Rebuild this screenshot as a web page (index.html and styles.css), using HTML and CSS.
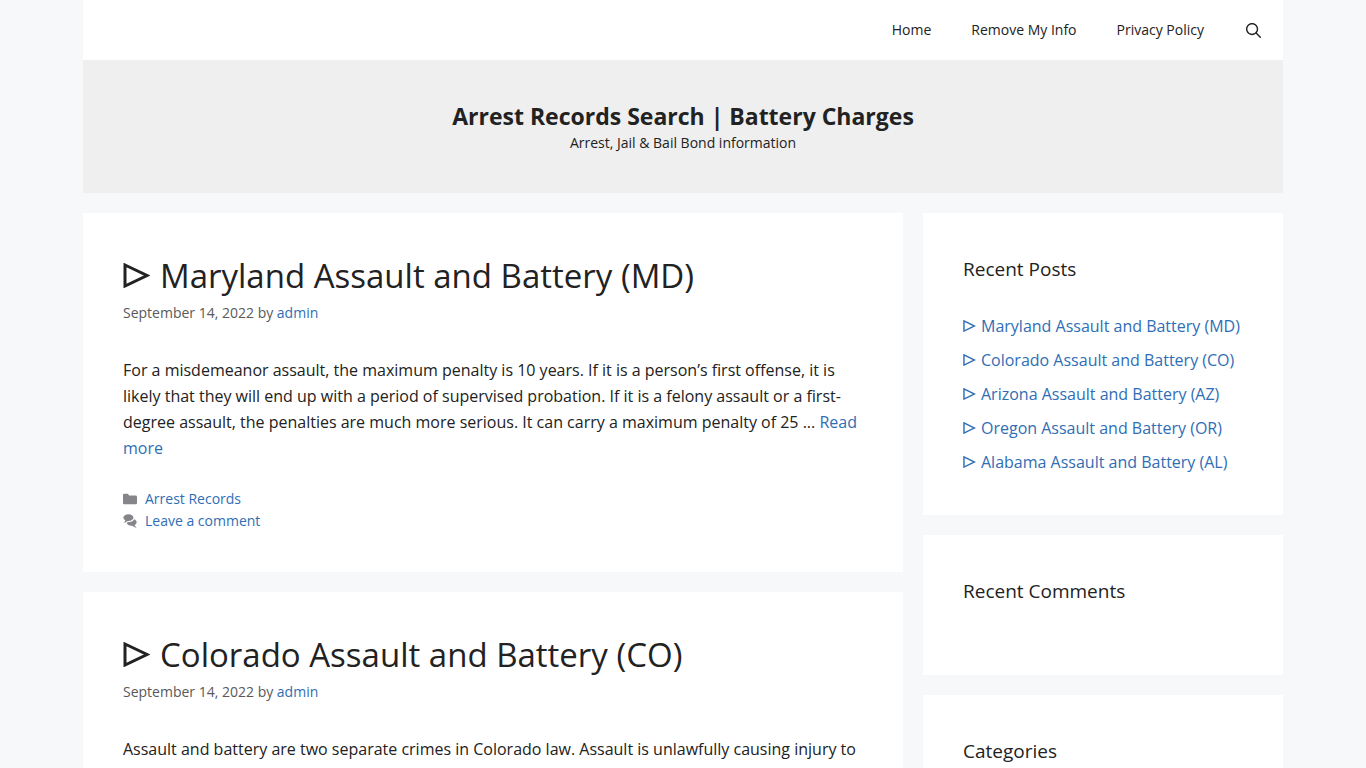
FILE: index.html
```html
<!DOCTYPE html>
<html lang="en">
<head>
<meta charset="utf-8">
<meta name="viewport" content="width=device-width, initial-scale=1">
<title>Arrest Records Search | Battery Charges</title>
<link rel="stylesheet" href="styles.css">
</head>
<body>
<nav class="main-nav container" aria-label="Primary">
  <a href="#">Home</a>
  <a href="#">Remove My Info</a>
  <a href="#">Privacy Policy</a>
  <button class="search-toggle" type="button" aria-label="Open search">
    <svg viewBox="0 0 512 512" width="15" height="15" aria-hidden="true"><path fill="currentColor" fill-rule="evenodd" d="M208 48c-88.366 0-160 71.634-160 160s71.634 160 160 160 160-71.634 160-160S296.366 48 208 48zM0 208C0 93.125 93.125 0 208 0s208 93.125 208 208c0 48.741-16.765 93.566-44.843 129.024l133.826 134.018c9.366 9.379 9.355 24.575-.025 33.941-9.379 9.366-24.575 9.355-33.941-.025L337.238 370.987C301.747 399.167 256.839 416 208 416 93.125 416 0 322.875 0 208z"/></svg>
  </button>
</nav>
<header class="site-header container">
  <p class="site-title"><a href="#">Arrest Records Search | Battery Charges</a></p>
  <p class="tagline">Arrest, Jail &amp; Bail Bond information</p>
</header>
<div class="columns container">
  <main class="content">
    <article class="post box">
      <h2 class="post-title"><a href="#"><svg class="tri" viewBox="0 0 27 25" aria-hidden="true"><path d="M2 2L24 12.500L2 23Z"/></svg>Maryland Assault and Battery (MD)</a></h2>
      <p class="meta">September 14, 2022 by <a href="#">admin</a></p>
      <p class="summary">For a misdemeanor assault, the maximum penalty is 10 years. If it is a person’s first offense, it is likely that they will end up with a period of supervised probation. If it is a felony assault or a first-degree assault, the penalties are much more serious. It can carry a maximum penalty of 25 ... <a href="#">Read more</a></p>
      <footer class="post-footer">
        <p><svg viewBox="0 0 512 512" aria-hidden="true"><path d="M0 112c0-26.510 21.490-48 48-48h110.014a48 48 0 0143.592 27.907l12.349 26.791A16 16 0 00228.486 128H464c26.510 0 48 21.490 48 48v224c0 26.510-21.490 48-48 48H48c-26.510 0-48-21.490-48-48V112z"/></svg><a href="#">Arrest Records</a></p>
        <p><svg viewBox="0 0 512 512" aria-hidden="true"><path d="M132.838 329.973a435.298 435.298 0 0016.769-9.004c13.363-7.574 26.587-16.142 37.419-25.507 7.544.597 15.270.925 23.098.925 54.905 0 105.634-15.311 143.285-41.280 23.728-16.365 43.115-37.692 54.155-62.645 54.739 22.205 91.498 63.272 91.498 110.286 0 42.186-29.558 79.498-75.090 102.828 23.460 49.216 75.090 101.709 75.090 101.709s-115.837-38.350-154.424-78.460c-9.956 1.120-20.297 1.758-30.793 1.758-88.727 0-162.927-43.071-181.007-100.610z"/><path d="M383.371 132.502c0 70.603-82.961 127.787-185.216 127.787-10.496 0-20.837-.639-30.793-1.757-38.587 40.093-154.424 78.429-154.424 78.429s51.630-52.472 75.090-101.670C42.496 211.971 12.938 174.674 12.938 132.502c0-70.641 82.963-127.810 185.217-127.810 102.255 0 185.216 57.169 185.216 127.810z"/></svg><a href="#">Leave a comment</a></p>
      </footer>
    </article>
    <article class="post box">
      <h2 class="post-title"><a href="#"><svg class="tri" viewBox="0 0 27 25" aria-hidden="true"><path d="M2 2L24 12.500L2 23Z"/></svg>Colorado Assault and Battery (CO)</a></h2>
      <p class="meta">September 14, 2022 by <a href="#">admin</a></p>
      <p class="summary">Assault and battery are two separate crimes in Colorado law. Assault is unlawfully causing injury to</p>
    </article>
  </main>
  <aside class="sidebar">
    <section class="widget box">
      <h2>Recent Posts</h2>
      <ul>
        <li><a href="#"><svg class="tri" viewBox="0 0 27 25" aria-hidden="true"><path d="M2 2L24 12.500L2 23Z"/></svg>Maryland Assault and Battery (MD)</a></li>
        <li><a href="#"><svg class="tri" viewBox="0 0 27 25" aria-hidden="true"><path d="M2 2L24 12.500L2 23Z"/></svg>Colorado Assault and Battery (CO)</a></li>
        <li><a href="#"><svg class="tri" viewBox="0 0 27 25" aria-hidden="true"><path d="M2 2L24 12.500L2 23Z"/></svg>Arizona Assault and Battery (AZ)</a></li>
        <li><a href="#"><svg class="tri" viewBox="0 0 27 25" aria-hidden="true"><path d="M2 2L24 12.500L2 23Z"/></svg>Oregon Assault and Battery (OR)</a></li>
        <li><a href="#"><svg class="tri" viewBox="0 0 27 25" aria-hidden="true"><path d="M2 2L24 12.500L2 23Z"/></svg>Alabama Assault and Battery (AL)</a></li>
      </ul>
    </section>
    <section class="widget box"><h2>Recent Comments</h2></section>
    <section class="widget box"><h2>Categories</h2></section>
  </aside>
</div>
</body>
</html>
```
FILE: styles.css
```css
* { box-sizing: border-box; }
html { overflow: hidden; height: 100%; }
body {
  margin: 0;
  height: 100%;
  overflow: hidden;
  background: #f7f8f9;
  color: #222;
  font: 16px/26px "Segoe UI", "Open Sans", sans-serif;
}
h2, p, ul { margin: 0; padding: 0; font-weight: 400; }
ul { list-style: none; }
a { color: #2f6eb5; text-decoration: none; }
.container { max-width: 1200px; margin: 0 auto; }
.main-nav {
  display: flex;
  justify-content: flex-end;
  background: #fff;
  font-size: 14px;
  line-height: 60px;
}
.main-nav a { padding: 0 20px; color: #222; }
.search-toggle {
  display: flex;
  align-items: center;
  padding: 0 22px;
  border: 0;
  background: none;
  color: #222;
}
.site-header { padding: 40px; background: #efefef; text-align: center; }
.site-title { font-size: 23px; line-height: 32px; font-weight: 700; }
.site-title a { color: #222; }
.tagline { font-size: 14px; line-height: 21px; }
.columns {
  display: grid;
  grid-template-columns: minmax(0, 1fr) 30%;
  gap: 20px;
  margin-top: 20px;
}
.content, .sidebar { display: flex; flex-direction: column; gap: 20px; }
.box { padding: 40px; background: #fff; }
.post-title { font-size: 33px; line-height: 46px; }
.post-title a { color: #222; }
.tri {
  display: inline-block;
  fill: none;
  stroke: currentColor;
  stroke-width: 3;
  width: 27px;
  height: 25px;
  margin-right: 10px;
}
.meta { font-size: 14px; line-height: 28px; color: #595959; }
.summary { margin-top: 30px; }
.post-footer { margin-top: 27px; font-size: 14px; line-height: 22px; }
.post-footer p { display: flex; align-items: center; gap: 8px; }
.post-footer svg { width: 14px; height: 14px; fill: #85858a; }
.widget h2 { margin-bottom: 28px; font-size: 19px; line-height: 32px; }
.widget ul { display: grid; gap: 8px; }
.widget li { line-height: 26px; }
.widget .tri { width: 13px; height: 12px; margin-right: 5px; }
```
